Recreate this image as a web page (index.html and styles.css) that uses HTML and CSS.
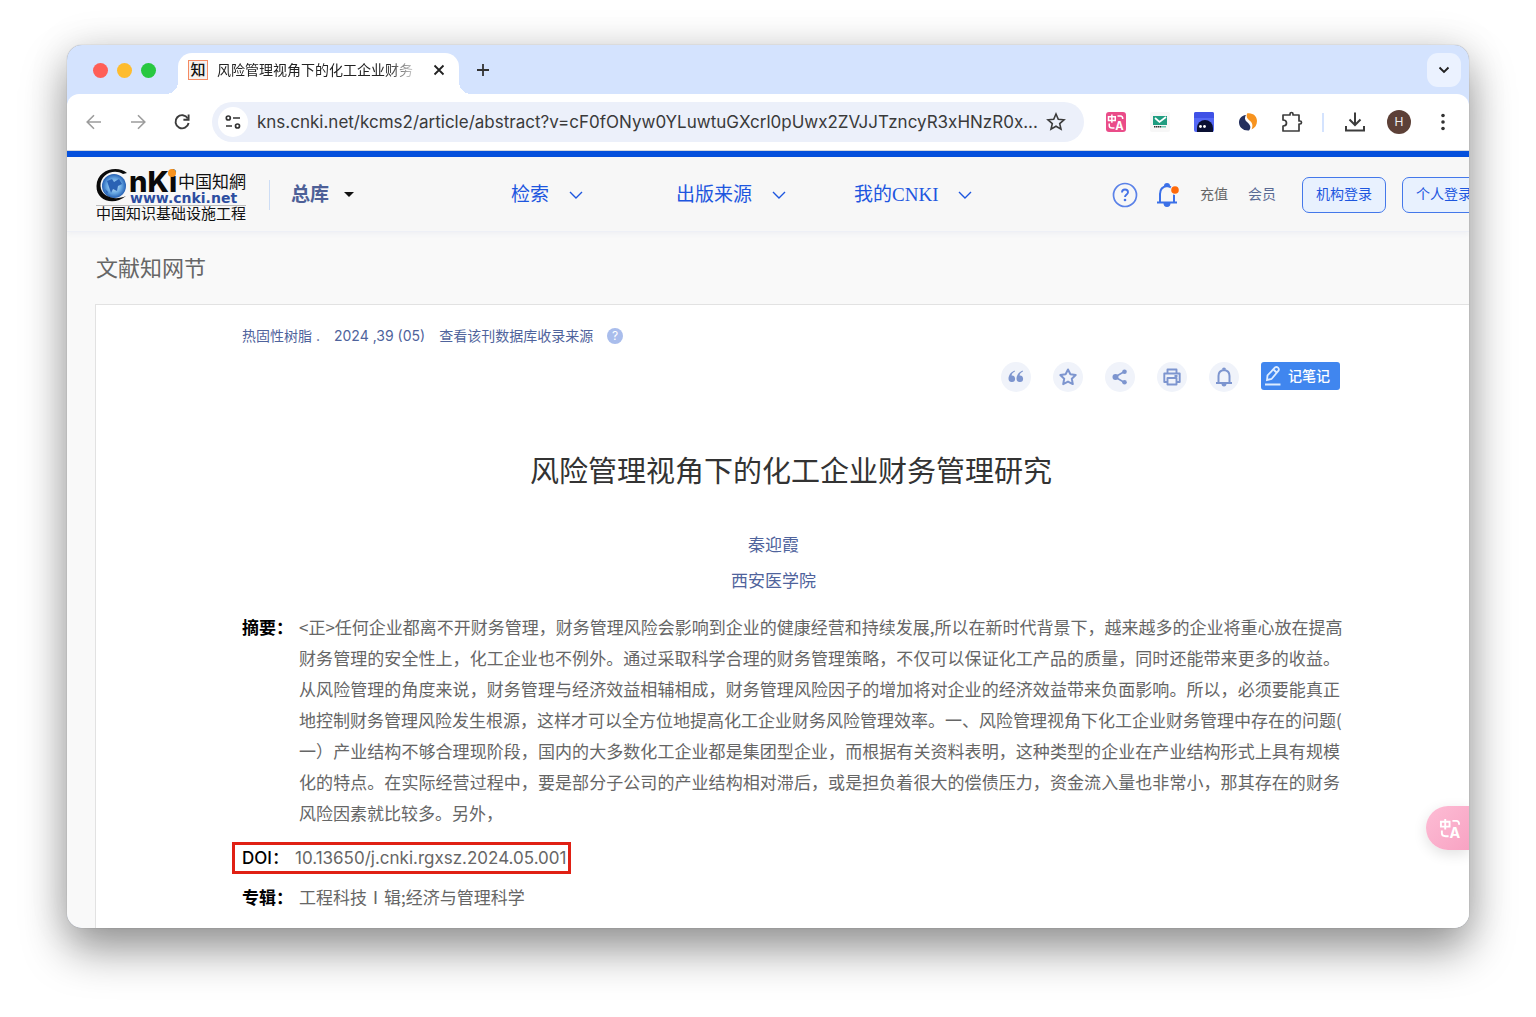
FILE: index.html
```html
<!DOCTYPE html>
<html lang="zh-CN">
<head>
<meta charset="utf-8">
<meta name="viewport" content="width=device-width, initial-scale=1">
<title>风险管理视角下的化工企业财务管理研究</title>
<link rel="stylesheet" href="styles.css">
</head>
<body>
<svg class="sprite" aria-hidden="true">
  <symbol id="chevron" viewBox="0 0 14 8"><path d="M1 1l6 6 6-6" fill="none" stroke="currentColor" stroke-width="1.4"/></symbol>
  <symbol id="translate" viewBox="0 0 24 24">
    <path d="M2 5h9v5H2zM6.500 2v11M14 4h4q3 0 3 4M3 14v3q0 3 4 3h3" fill="none" stroke="currentColor" stroke-width="2"/>
    <text x="11" y="22" class="translate-letter">A</text>
  </symbol>
</svg>
<div class="window">
  <div class="tabs">
    <div class="lights"><i class="light light-red"></i><i class="light light-amber"></i><i class="light light-green"></i></div>
    <div class="tab">
      <span class="favicon">知</span>
      <span class="tab-title">风险管理视角下的化工企业财务</span>
      <button class="tab-close" aria-label="关闭标签页"><svg width="12" height="12" viewBox="0 0 12 12"><path d="M1.500 1.500l9 9M10.500 1.500l-9 9" fill="none" stroke="#222" stroke-width="1.800"/></svg></button>
    </div>
    <button class="new-tab" aria-label="新标签页"><svg width="14" height="14" viewBox="0 0 14 14"><path d="M7 1v12M1 7h12" fill="none" stroke="#333" stroke-width="1.800"/></svg></button>
    <button class="tab-search" aria-label="搜索标签页"><svg width="12" height="8" viewBox="0 0 12 8"><path d="M1.500 1.500L6 6l4.500-4.500" fill="none" stroke="#222" stroke-width="1.900"/></svg></button>
  </div>

  <div class="toolbar">
    <button class="tool faded" aria-label="后退"><svg width="18" height="18" viewBox="0 0 18 18"><path d="M16 9H2.500M9 2.200L2.200 9 9 15.800" fill="none" stroke="currentColor" stroke-width="1.600"/></svg></button>
    <button class="tool faded" aria-label="前进"><svg width="18" height="18" viewBox="0 0 18 18"><path d="M2 9h13.500M9 2.200L15.800 9 9 15.800" fill="none" stroke="currentColor" stroke-width="1.600"/></svg></button>
    <button class="tool" aria-label="重新加载"><svg width="18" height="18" viewBox="0 0 18 18"><path d="M14.800 5.400A6.600 6.600 0 1 0 15.600 10" fill="none" stroke="currentColor" stroke-width="1.900"/><path d="M15.600 1.500v5.200h-5.200" fill="none" stroke="currentColor" stroke-width="1.900"/></svg></button>
    <div class="address">
      <button class="site-info" aria-label="网站信息"><svg width="16" height="16" viewBox="0 0 16 16" fill="none" stroke="#333" stroke-width="1.700"><circle cx="3.300" cy="4" r="2"/><path d="M8 4h7M1 12h6"/><circle cx="12.500" cy="12" r="2"/></svg></button>
      <input class="url" type="text" aria-label="地址" value="kns.cnki.net/kcms2/article/abstract?v=cF0fONyw0YLuwtuGXcrl0pUwx2ZVJJTzncyR3xHNzR0x...">
      <button class="bookmark" aria-label="收藏"><svg width="20" height="20" viewBox="0 0 20 20"><path d="M10 2l2.300 5.300 5.700.500-4.300 3.800 1.300 5.600-5-3-5 3 1.300-5.600L2 7.800l5.700-.500z" fill="none" stroke="#3c3c3c" stroke-width="1.600"/></svg></button>
    </div>
    <button class="tool" aria-label="翻译扩展"><span class="ext ext-pink"><svg width="18" height="18"><use href="#translate"/></svg></span></button>
    <button class="tool" aria-label="邮件扩展"><svg width="20" height="20" viewBox="0 0 20 20"><rect width="20" height="20" rx="2" fill="#f7f7f7"/><path d="M3 4h14v9H3z" fill="#1f9d80"/><path d="M5 6l4.500 4L16 5" fill="none" stroke="#fff" stroke-width="1.700"/><path d="M4 14.700h7" stroke="#333" stroke-width="1.400" stroke-dasharray="1.500 .500"/><path d="M11 14.700h5" stroke="#6cc5ae" stroke-width="1.400"/></svg></button>
    <button class="tool" aria-label="助手扩展"><svg width="20" height="20" viewBox="0 0 20 20"><rect width="20" height="20" rx="2" fill="#5468f5"/><path d="M0 2q0-2 2-2h16q2 0 2 2v4H0z" fill="#3f51e6"/><path d="M3 20v-4a8 8 0 0 1 16 0v4z" fill="#0a1033"/><circle cx="6.500" cy="14.500" r="1.400" fill="#fff"/><circle cx="10.500" cy="14.500" r="1.400" fill="#fff"/></svg></button>
    <button class="tool" aria-label="分析扩展"><svg width="20" height="20" viewBox="0 0 20 20"><path d="M8 3C3 3.500 1 7 1 10.500 1 15 5 19 11 18.500 14 15 11.500 12 9 10 6.500 8 6.500 5.500 8 3z" fill="#24305e"/><path d="M9 1.500c6-1 10 3 10 7.500 0 4-2 7-5.500 8.500C15.500 13 14 10.500 11.500 8.500 9 6.500 8 4.500 9 1.500z" fill="#f7931e"/></svg></button>
    <button class="tool" aria-label="扩展程序"><svg width="22" height="22" viewBox="0 0 22 22"><path d="M2 4h7V3q0-1.500 1.500-1.500T12 3v1h6v6h1q1.500 0 1.500 1.500T19 13h-1v7H2v-5q3.500 0 3.500-3T2 9z" fill="none" stroke="#3c3c3c" stroke-width="1.700" stroke-linejoin="round"/></svg></button>
    <span class="tool-rule"></span>
    <button class="tool" aria-label="下载内容"><svg width="22" height="22" viewBox="0 0 22 22"><path d="M11 1.500v12M5.500 8.500L11 14l5.500-5.500M2 15v4.500h18V15" fill="none" stroke="currentColor" stroke-width="2"/></svg></button>
    <button class="tool" aria-label="个人资料"><span class="avatar">H</span></button>
    <button class="tool" aria-label="更多"><svg width="4" height="18" viewBox="0 0 4 18" fill="#333"><circle cx="2" cy="2.500" r="1.800"/><circle cx="2" cy="9" r="1.800"/><circle cx="2" cy="15.500" r="1.800"/></svg></button>
  </div>

  <div class="site">
    <header class="header">
      <a class="logo" href="#" aria-label="中国知网">
        <svg width="151" height="54" viewBox="0 0 151 54">
          <defs><radialGradient id="globe"><stop offset="0" stop-color="#d6ecfb"/><stop offset=".600" stop-color="#6aaae4"/><stop offset="1" stop-color="#2460b4"/></radialGradient></defs>
          <circle cx="18" cy="18" r="12" fill="url(#globe)"/>
          <path d="M11 13l5-2 2 3 5-3 3 5-4 2-1 5-4-2-2 4-2-6zM9 21l3 3-1 2z" fill="#2a62b4"/>
          <path d="M31 5C22-3 1 1 .500 18 0 33 18 38 30 28 19 33 5 29 4.500 18 4 6 18 0 27 6z" fill="#0a0a0a"/>
          <text x="33" y="24" class="logo-name">nKi</text>
          <circle cx="76" cy="5" r="4" fill="#f7931e"/>
          <text x="82" y="20" class="logo-cn">中国知網</text>
          <text x="34" y="35" class="logo-url">www.cnki.net</text>
          <path d="M0 37.500h150" stroke="#bbb"/>
          <text x="0" y="51" class="logo-tag">中国知识基础设施工程</text>
        </svg>
      </a>
      <button class="library">总库<svg width="10" height="5" viewBox="0 0 10 5"><path d="M0 0h10L5 5z" fill="#111"/></svg></button>
      <nav class="nav">
        <a href="#">检索<svg width="14" height="8"><use href="#chevron"/></svg></a>
        <a href="#">出版来源<svg width="14" height="8"><use href="#chevron"/></svg></a>
        <a href="#">我的CNKI<svg width="14" height="8"><use href="#chevron"/></svg></a>
      </nav>
      <div class="account">
        <a href="#" class="help" aria-label="帮助"><svg width="26" height="26" viewBox="0 0 26 26"><circle cx="13" cy="13" r="11.500" fill="none" stroke="#5b82e8" stroke-width="1.700"/><path d="M10 10.500q0-3 3-3t3 2.800c0 2.200-3 2.200-3 4.700" fill="none" stroke="#4673e6" stroke-width="1.900"/><circle cx="13" cy="18" r="1.300" fill="#4673e6"/></svg></a>
        <a href="#" class="notice" aria-label="消息"><svg width="24" height="26" viewBox="0 0 24 26"><path d="M4 20v-8q0-7 7-8 7 1 7 8v8M1 20.500h20" fill="none" stroke="#3b70e8" stroke-width="2"/><path d="M8 4q0-3 3-3t3 3zM7.500 21q0 4 3.500 4t3.500-4z" fill="#3b70e8"/><circle cx="19" cy="8" r="5" fill="#f7f7f7"/><circle cx="19" cy="8" r="3.800" fill="#ff6a0a"/></svg></a>
        <a href="#" class="recharge">充值</a>
        <a href="#" class="member">会员</a>
        <button class="login">机构登录</button>
        <button class="login">个人登录</button>
      </div>
    </header>

    <div class="section">文献知网节</div>

    <main class="paper">
      <div class="source">
        <a href="#">热固性树脂 .</a><a href="#">2024 ,39 (05)</a><a href="#">查看该刊数据库收录来源</a>
        <a href="#" class="source-help" aria-label="说明">?</a>
      </div>
      <div class="actions">
        <button class="action" aria-label="引用"><svg width="18" height="18" viewBox="0 0 18 18" fill="#7d95cf"><path d="M7.500 2.500C4 4 1.500 7 1.500 11a3.300 3.300 0 1 0 3-3.600C5 5.500 6 4.200 8 3.500zM15.500 2.500C12 4 9.500 7 9.500 11a3.300 3.300 0 1 0 3-3.600C13 5.500 14 4.200 16 3.500z"/></svg></button>
        <button class="action" aria-label="收藏"><svg width="18" height="18" viewBox="0 0 18 18"><path d="M9 1.500l2.400 4.800 5.300.800-3.900 3.700 1 5.300L9 13.600l-4.800 2.500 1-5.300L1.300 7.100l5.300-.800z" fill="none" stroke="#7d95cf" stroke-width="2" stroke-linejoin="round"/></svg></button>
        <button class="action" aria-label="分享"><svg width="18" height="18" viewBox="0 0 18 18" fill="#7d95cf"><path d="M4 9l9.500-5.500M4 9l9.500 5.500" stroke="#7d95cf" stroke-width="1.500"/><circle cx="4.500" cy="9" r="3"/><circle cx="13.500" cy="3.700" r="2.300"/><circle cx="13.500" cy="14.300" r="2.300"/></svg></button>
        <button class="action" aria-label="打印"><svg width="18" height="18" viewBox="0 0 18 18" fill="none" stroke="#7d95cf" stroke-width="1.900" stroke-linejoin="round"><path d="M4.500 5V1.500h9V5M4.500 14H1.300V5.500h15.400V14h-3.200M11.500 8h3"/><path d="M4.500 10h9v6.500h-9z"/></svg></button>
        <button class="action" aria-label="关注"><svg width="18" height="20" viewBox="0 0 18 20"><path d="M3.500 15.500V9q0-5.500 5.500-6 5.500.500 5.500 6v6.500M1 16h16" fill="none" stroke="#7d95cf" stroke-width="2"/><path d="M7 2.500q0-2 2-2t2 2zM6.500 16.500q0 3 2.500 3t2.500-3z" fill="#7d95cf"/></svg></button>
        <button class="note"><svg width="18" height="22" viewBox="0 0 18 22" fill="none" stroke="#dcebff" stroke-width="1.800"><path d="M3 15l.500-4.500L11 2.500q1.500-1.200 3 .200t.500 3L7.500 14zM9.500 4.500l3.500 3.500M1 19.500h15.500"/></svg>记笔记</button>
      </div>
      <h1 class="title">风险管理视角下的化工企业财务管理研究</h1>
      <div class="authors"><a href="#">秦迎霞</a><a href="#">西安医学院</a></div>
      <div class="row abstract">
        <span class="label">摘要：</span>
        <p class="text">
          <span class="line">&lt;正&gt;任何企业都离不开财务管理，财务管理风险会影响到企业的健康经营和持续发展,所以在新时代背景下，越来越多的企业将重心放在提高</span>
          <span class="line">财务管理的安全性上，化工企业也不例外。通过采取科学合理的财务管理策略，不仅可以保证化工产品的质量，同时还能带来更多的收益。</span>
          <span class="line">从风险管理的角度来说，财务管理与经济效益相辅相成，财务管理风险因子的增加将对企业的经济效益带来负面影响。所以，必须要能真正</span>
          <span class="line">地控制财务管理风险发生根源，这样才可以全方位地提高化工企业财务风险管理效率。一、风险管理视角下化工企业财务管理中存在的问题(</span>
          <span class="line">一）产业结构不够合理现阶段，国内的大多数化工企业都是集团型企业，而根据有关资料表明，这种类型的企业在产业结构形式上具有规模</span>
          <span class="line">化的特点。在实际经营过程中，要是部分子公司的产业结构相对滞后，或是担负着很大的偿债压力，资金流入量也非常小，那其存在的财务</span>
          <span class="line line-last">风险因素就比较多。另外，</span>
        </p>
      </div>
      <div class="row doi"><span class="label">DOI：</span><span>10.13650/j.cnki.rgxsz.2024.05.001</span></div>
      <div class="row album"><span class="label">专辑：</span><span>工程科技Ⅰ辑;经济与管理科学</span></div>
    </main>
  </div>
  <button class="float" aria-label="翻译"><svg width="23" height="23"><use href="#translate"/></svg></button>
</div>
</body>
</html>
```

FILE: styles.css
```css
* { box-sizing: border-box; }

body {
  margin: 0;
  padding: 45px 67px 89px;
  background: #fff;
  color: #666;
  font: 17px/31px Inter, "Noto Sans CJK SC", sans-serif;
}

a { color: inherit; text-decoration: none; }
button { margin: 0; padding: 0; border: 0; background: none; color: inherit; font: inherit; }
svg { display: block; flex: none; }
.sprite { display: none; }
.translate-letter { font: 700 15px Inter, sans-serif; fill: currentColor; }

.window {
  position: relative;
  overflow: hidden;
  border-radius: 15px;
  background: #d4e3fe;
  box-shadow: 0 0 1px rgba(0, 0, 0, .4), 0 0 40px rgba(0, 0, 0, .1), 0 22px 45px rgba(0, 0, 0, .4);
}

/* Tab strip */
.tabs { display: flex; align-items: flex-start; padding: 8px 8px 0 26px; }
.lights { display: flex; gap: 9px; width: 85px; padding-top: 10px; }
.light { width: 15px; height: 15px; border-radius: 50%; }
.light-red { background: #ff5f57; }
.light-amber { background: #febc2e; }
.light-green { background: #28c840; }
.tab {
  position: relative;
  display: flex;
  align-items: center;
  width: 281px;
  height: 41px;
  padding: 0 10px 7px;
  border-radius: 14px 14px 0 0;
  background: #fff;
}
.tab::before, .tab::after {
  content: "";
  position: absolute;
  bottom: 0;
  width: 12px;
  height: 12px;
}
.tab::before { left: -12px; background: radial-gradient(circle at 0 0, transparent 12px, #fff 12px); }
.tab::after { right: -12px; background: radial-gradient(circle at 100% 0, transparent 12px, #fff 12px); }
.favicon {
  width: 20px;
  height: 20px;
  border: 1px solid #f58a62;
  background: #f6f1ee;
  color: #111;
  font-size: 15px;
  font-weight: 500;
  line-height: 17px;
  text-align: center;
}
.tab-title {
  flex: 1;
  margin-left: 9px;
  overflow: hidden;
  color: #222;
  font-size: 14px;
  line-height: 20px;
  white-space: nowrap;
  -webkit-mask-image: linear-gradient(90deg, #000 170px, transparent 204px);
  mask-image: linear-gradient(90deg, #000 170px, transparent 204px);
}
.tab-close { width: 20px; height: 20px; padding: 4px; }
.new-tab { margin-left: 7px; padding: 10px; }
.tab-search {
  display: grid;
  place-items: center;
  width: 34px;
  height: 34px;
  margin-left: auto;
  border-radius: 11px;
  background: #ebf2ff;
}

/* Toolbar */
.toolbar {
  display: flex;
  align-items: center;
  height: 57px;
  padding: 0 4px 0 5px;
  border-radius: 12px 12px 0 0;
  border-bottom: 1px solid #d5d8de;
  background: #fff;
}
.tool { display: grid; flex: none; place-items: center; width: 44px; height: 40px; color: #3c3c3c; }
.faded { color: #9c9c9c; }
.address {
  display: flex;
  flex: 1;
  align-items: center;
  min-width: 0;
  height: 40px;
  margin: 0 10px 0 8px;
  padding: 0 18px 0 6px;
  border-radius: 20px;
  background: #ecf0fa;
}
.site-info { display: grid; flex: none; place-items: center; width: 30px; height: 30px; border-radius: 50%; background: #fff; }
.url {
  flex: 1;
  min-width: 0;
  margin: 0 4px 0 9px;
  padding: 0;
  border: 0;
  background: none;
  color: #3a3a3a;
  font: 17px/24px Inter, sans-serif;
}
.ext { display: grid; place-items: center; width: 20px; height: 20px; border-radius: 3px; }
.ext-pink { background: #ea4c89; color: #fff; }
.tool-rule { flex: none; width: 2px; height: 19px; margin: 0 9px 0 8px; background: #d4e3fe; }
.avatar { width: 24px; height: 24px; border-radius: 50%; background: #5d4037; color: #eee; font-size: 12px; line-height: 24px; text-align: center; }

/* Site header */
.site { border-top: 6px solid #0550dc; background: #f9f9f9; }
.header {
  display: flex;
  align-items: center;
  height: 75px;
  padding: 1px 0 0 29px;
  border-bottom: 1px solid #eef0f6;
  background: #f7f7f7;
  box-shadow: 0 2px 5px rgba(60, 80, 140, .05);
  font: 19px/30px "Liberation Serif", "Noto Sans CJK SC", serif;
  white-space: nowrap;
}
.logo { flex: none; width: 151px; }
.logo svg { overflow: visible; }
.logo-name { font: 800 29px Inter, sans-serif; fill: #0a0a0a; }
.logo-cn { font: 17px "Noto Sans CJK SC", sans-serif; fill: #111; }
.logo-url { font: 700 14px "DejaVu Sans", sans-serif; fill: #2c4da0; }
.logo-tag { font: 15px "Noto Sans CJK SC", sans-serif; fill: #111; }
.library {
  display: flex;
  flex: none;
  align-items: center;
  gap: 15px;
  margin-left: 22px;
  padding-left: 21px;
  border-left: 1px solid #cdddf5;
  color: #4d6097;
  font-weight: 700;
}
.nav { display: grid; flex: none; grid-template-columns: 165px 178px auto; margin-left: 157px; color: #1d56df; }
.nav a { display: flex; align-items: center; gap: 20px; }
.account { display: flex; flex: none; align-items: center; margin-left: auto; margin-right: -17px; color: #666; font-size: 14px; }
.notice { margin-left: 18px; }
.recharge { margin-left: 20px; }
.member { margin: 0 26px 0 20px; color: #5a6a94; }
.login { width: 84px; height: 36px; border: 1px solid #4478ea; border-radius: 7px; background: #e8f1fe; color: #1d56df; }
.login + .login { margin-left: 16px; }

.section { padding: 20px 29px 20px; font-size: 22px; line-height: 32px; }

/* Article */
.paper {
  margin-left: 28px;
  padding: 20px 129px 16px 146px;
  border: solid #e2e2e2;
  border-width: 1px 0 0 1px;
  background: #fff;
}
.source { display: flex; align-items: center; gap: 14px; color: #4f639c; font-size: 14px; line-height: 22px; }
.source-help { width: 16px; height: 16px; border-radius: 50%; background: #a9bdec; color: #fff; font-size: 12px; line-height: 16px; text-align: center; }
.actions { display: flex; align-items: flex-start; justify-content: flex-end; gap: 22px; margin-top: 15px; }
.action { display: grid; place-items: center; width: 30px; height: 30px; border-radius: 50%; background: #f0f3fa; }
.note {
  display: flex;
  align-items: center;
  gap: 6px;
  width: 79px;
  height: 28px;
  padding-left: 3px;
  border-radius: 3px;
  background: #4086ef;
  color: #fff;
  font-size: 14px;
  font-weight: 500;
  line-height: 26px;
}
.title { margin: 60px 0 0; color: #333; font-size: 29px; font-weight: 400; line-height: 40px; text-align: center; }
.authors { display: flex; flex-direction: column; align-items: center; margin-top: 35px; padding-right: 35px; color: #4f639c; line-height: 36px; }
.row { display: flex; }
.label { flex: none; width: 57px; color: #000; font-weight: 700; }
.abstract, .album { font-family: "Noto Sans CJK SC", sans-serif; }
.abstract { margin-top: 12px; }
.text { flex: 1; min-width: 0; margin: 0; }
.line { display: block; text-align: justify; text-align-last: justify; white-space: nowrap; }
.line-last { text-align-last: left; }
.doi {
  width: fit-content;
  margin: 14px 0 0 -10px;
  padding: 0 2px 0 7px;
  border: 3px solid #e02014;
  line-height: 26px;
}
.doi .label { width: 53px; font-weight: 500; }
.album { margin-top: 7px; }

.float {
  position: absolute;
  right: 0;
  bottom: 78px;
  width: 43px;
  height: 44px;
  padding-left: 13px;
  border-radius: 22px 0 0 22px;
  background: linear-gradient(135deg, #fdbdd5, #f8a3c3);
  box-shadow: 0 4px 14px rgba(0, 0, 0, .12);
  color: #fff;
}
```
